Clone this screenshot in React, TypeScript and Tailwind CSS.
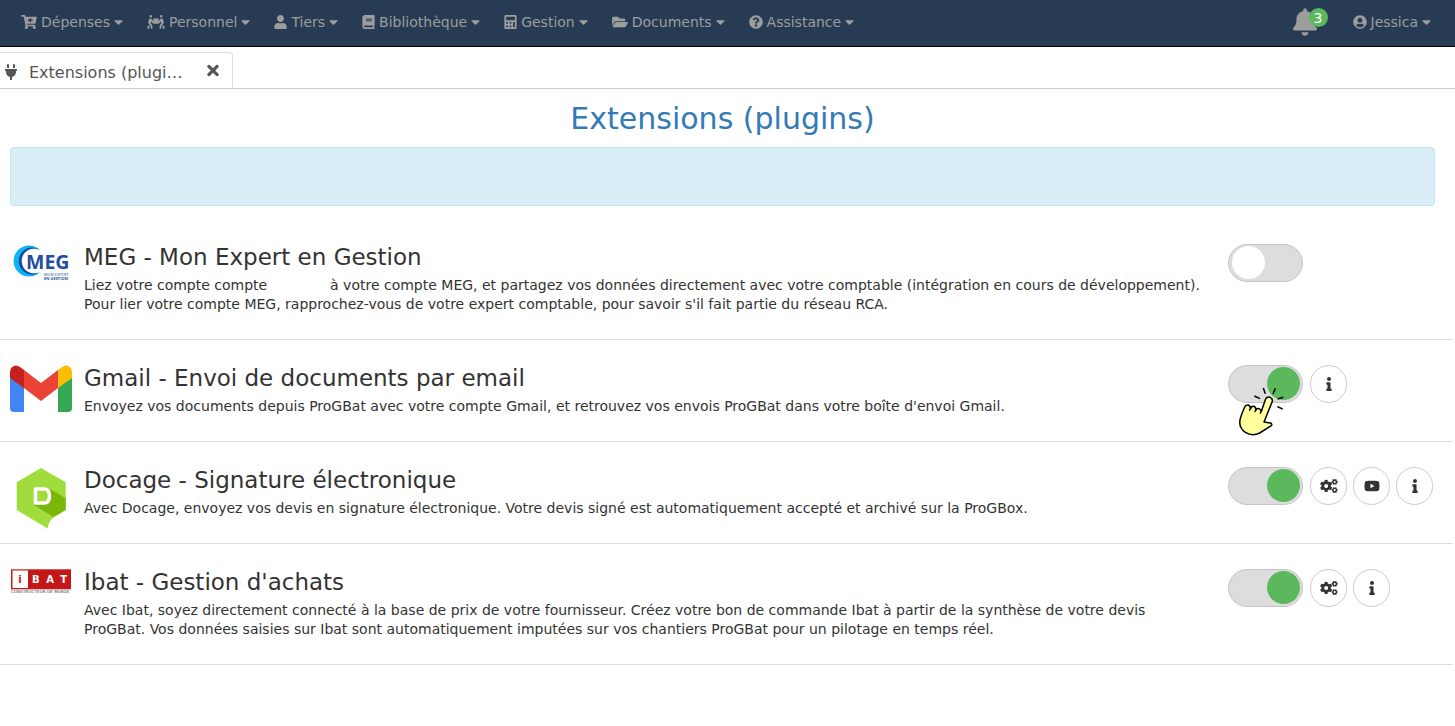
import type { ReactNode } from "react";
import type { IconType } from "react-icons";
import {
  FaBell,
  FaBook,
  FaCalculator,
  FaCaretDown,
  FaCartPlus,
  FaCogs,
  FaFolderOpen,
  FaInfo,
  FaPeopleCarry,
  FaPlug,
  FaQuestionCircle,
  FaTimes,
  FaUser,
  FaUserCircle,
  FaYoutube,
} from "react-icons/fa";

type Menu = { label: string; icon: IconType; iconWidth: string };

const menus: Menu[] = [
  { label: "Dépenses", icon: FaCartPlus, iconWidth: "w-4" },
  { label: "Personnel", icon: FaPeopleCarry, iconWidth: "w-[18px]" },
  { label: "Tiers", icon: FaUser, iconWidth: "w-[13px]" },
  { label: "Bibliothèque", icon: FaBook, iconWidth: "w-[13px]" },
  { label: "Gestion", icon: FaCalculator, iconWidth: "w-[13px]" },
  { label: "Documents", icon: FaFolderOpen, iconWidth: "w-4" },
  { label: "Assistance", icon: FaQuestionCircle, iconWidth: "w-3.5" },
];

function MenuButton({ label, icon: Icon, iconWidth }: Menu) {
  return (
    <button type="button" className="flex items-center gap-1 whitespace-nowrap">
      <Icon className={`h-3.5 ${iconWidth}`} />
      <span>{label}</span>
      <FaCaretDown className="h-3.5 w-[9px]" />
    </button>
  );
}

function MegLogo() {
  return (
    <svg viewBox="0 0 62 40" className="w-full" aria-hidden="true">
      <path d="M30 6A15.500 15.500 0 1 0 30 28A12.500 12.500 0 1 1 30 6Z" fill="#0db4f5" />
      <path d="M30 6A13.500 13.500 0 1 0 30 28A12.500 12.500 0 1 1 30 6Z" fill="#1b4a9c" />
      <text x="16" y="24.500" fontFamily="Open Sans, sans-serif" fontWeight="700" fontSize="19.500" stroke="#fff" strokeWidth="1" paintOrder="stroke" fill="#1f4e9f">MEG</text>
      <text x="34" y="31.500" fontFamily="Open Sans, sans-serif" fontSize="4" fill="#1f4e9f">MON EXPERT</text>
      <text x="34" y="35.500" fontFamily="Open Sans, sans-serif" fontWeight="700" fontSize="4" fill="#1f4e9f">EN GESTION</text>
    </svg>
  );
}

function GmailLogo() {
  return (
    <svg viewBox="0 0 62 47" className="w-full" aria-hidden="true">
      <path d="M0 12L14 21V47H4Q0 47 0 43Z" fill="#4285f4" />
      <path d="M48 21L62 12V43Q62 47 58 47H48Z" fill="#34a853" />
      <path d="M48 5L52 2Q56 -1 60 2Q62 4 62 7V13L48 23Z" fill="#fbbc04" />
      <path d="M14 5L31 18L48 5V23L31 36L14 23Z" fill="#ea4335" />
      <path d="M14 5L10 2Q6 -1 2 2Q0 4 0 7V13L14 23Z" fill="#c5221f" />
    </svg>
  );
}

function DocageLogo() {
  return (
    <svg viewBox="0 0 62 62" className="w-full" aria-hidden="true">
      <path d="M31 1L55.700 15.300V43L44 50Q38.500 54 37.700 61.500L6.700 43V15.300Z" fill="#a0dc3c" />
      <path d="M40 22L55.700 31.300V43L43.500 50L24 38Z" fill="#7db60b" />
      <path d="M25.500 22H34Q39.500 22 39.500 29T34 36H25.500Z" fill="#a0dc3c" stroke="#fff" strokeWidth="3.500" strokeLinejoin="round" />
    </svg>
  );
}

function IbatLogo() {
  return (
    <svg viewBox="0 0 62 25" className="w-full" aria-hidden="true">
      <rect x="1" y="0.300" width="60" height="20" fill="#c41818" />
      <rect x="2.500" y="1.500" width="15.500" height="17.500" fill="#fff" />
      <g fontFamily="DejaVu Sans, sans-serif" fontWeight="700" fontSize="10" textAnchor="middle">
        <text x="10" y="14" fill="#c41818">i</text>
        <text x="25.700" y="14" fill="#fff">B</text>
        <text x="40" y="14" fill="#fff">A</text>
        <text x="53.700" y="14" fill="#fff">T</text>
      </g>
      <text x="1" y="23.700" fontFamily="DejaVu Sans, sans-serif" fontSize="4.200" fill="#444">CONSTRUCTEUR DE MARGE</text>
    </svg>
  );
}

function PointingHand() {
  return (
    <svg viewBox="66 93 144 153" className="pointer-events-none absolute top-[21px] left-[9px] w-12" aria-hidden="true">
      <path
        d="M152 132Q156 124 165 127Q174 131 172 139L147 201L166 204Q173 207 169 212L134 234Q112 245 91 232Q71 218 75 195Q77 184 89 156Q92 149 99 150Q106 152 107 161Q109 153 116 154Q123 156 123 165Q125 159 132 161Q138 164 139 169Z"
        fill="#ffff9e"
        stroke="#000"
        strokeWidth="4.500"
        strokeLinejoin="round"
      />
      <path d="M107 157L104 166M123 161L120 170M140 165L136 175" fill="none" stroke="#000" strokeWidth="4" strokeLinecap="round" />
      <path d="M118 123L135 131M145 99L151 116M181 100L174 117M188 132L205 127M187 155L203 162" fill="none" stroke="#000" strokeWidth="4.500" />
    </svg>
  );
}

type Action = { label: string; icon: IconType; iconWidth: string };

const info: Action = { label: "Informations", icon: FaInfo, iconWidth: "w-1.5" };
const settings: Action = { label: "Paramètres", icon: FaCogs, iconWidth: "w-[18px]" };
const video: Action = { label: "Vidéo", icon: FaYoutube, iconWidth: "w-4" };

type Plugin = {
  name: string;
  logo: ReactNode;
  description: ReactNode;
  enabled: boolean;
  pointer?: boolean;
  actions: Action[];
};

const plugins: Plugin[] = [
  {
    name: "MEG - Mon Expert en Gestion",
    logo: <MegLogo />,
    description: (
      <>
        Liez votre compte compte <span className="inline-block w-[54px]" /> à votre compte MEG, et partagez vos données
        directement avec votre comptable (intégration en cours de développement).
        <br />
        Pour lier votre compte MEG, rapprochez-vous de votre expert comptable, pour savoir s'il fait partie du réseau RCA.
      </>
    ),
    enabled: false,
    actions: [],
  },
  {
    name: "Gmail - Envoi de documents par email",
    logo: <GmailLogo />,
    description:
      "Envoyez vos documents depuis ProGBat avec votre compte Gmail, et retrouvez vos envois ProGBat dans votre boîte d'envoi Gmail.",
    enabled: true,
    pointer: true,
    actions: [info],
  },
  {
    name: "Docage - Signature électronique",
    logo: <DocageLogo />,
    description:
      "Avec Docage, envoyez vos devis en signature électronique. Votre devis signé est automatiquement accepté et archivé sur la ProGBox.",
    enabled: true,
    actions: [settings, video, info],
  },
  {
    name: "Ibat - Gestion d'achats",
    logo: <IbatLogo />,
    description:
      "Avec Ibat, soyez directement connecté à la base de prix de votre fournisseur. Créez votre bon de commande Ibat à partir de la synthèse de votre devis ProGBat. Vos données saisies sur Ibat sont automatiquement imputées sur vos chantiers ProGBat pour un pilotage en temps réel.",
    enabled: true,
    actions: [settings, info],
  },
];

function PluginRow({ plugin }: { plugin: Plugin }) {
  return (
    <li className="flex items-start border-b border-[#ddd] py-[25px] pl-2.5">
      <div className="-mb-4 w-[62px] shrink-0">{plugin.logo}</div>
      <div className="min-w-0 flex-1 pr-5 pl-3">
        <h2 className="text-[23px] leading-[26px]">{plugin.name}</h2>
        <p className="mt-1.5 text-sm leading-[19px]">{plugin.description}</p>
      </div>
      <div className="-mb-4 flex w-[225px] shrink-0 gap-1.5">
        <div className="relative mr-px h-[38px]">
          <input
            type="checkbox"
            role="switch"
            aria-label={plugin.name}
            defaultChecked={plugin.enabled}
            className="block h-[38px] w-[75px] appearance-none rounded-full border border-[#c5c5c5] bg-[#ddd] before:mt-px before:ml-[3px] before:block before:size-[33px] before:rounded-full before:bg-white checked:before:ml-[38px] checked:before:bg-[#5cb85c]"
          />
          {plugin.pointer && <PointingHand />}
        </div>
        {plugin.actions.map(({ label, icon: Icon, iconWidth }) => (
          <button
            key={label}
            type="button"
            aria-label={label}
            className="flex h-[38px] w-[37px] items-center justify-center rounded-full border border-[#ccc] bg-white"
          >
            <Icon className={`h-3.5 ${iconWidth}`} />
          </button>
        ))}
      </div>
    </li>
  );
}

export default function App() {
  return (
    <div className="bg-white font-['DejaVu_Sans',sans-serif] text-[#333]">
      <header className="flex h-[47px] items-center justify-between border-b border-black bg-[#283b54] pr-6 pb-0.5 pl-[21px] text-sm text-[#9d9d9d]">
        <nav className="flex items-center gap-6">
          {menus.map((menu) => (
            <MenuButton key={menu.label} {...menu} />
          ))}
        </nav>
        <div className="flex items-center gap-9">
          <button type="button" aria-label="Notifications" className="relative">
            <FaBell className="h-7 w-6" />
            <span className="absolute top-0 left-4 flex size-[19px] items-center justify-center rounded-full bg-[#5cb85c] text-sm text-white">
              3
            </span>
          </button>
          <MenuButton label="Jessica" icon={FaUserCircle} iconWidth="w-3.5" />
        </div>
      </header>

      <div className="flex border-b border-[#ccc] pt-[5px]">
        <div className="flex h-9 w-[233px] items-center rounded-tr border-t border-r border-[#ddd] pr-[13px] pl-[5px] text-base text-[#555]">
          <FaPlug className="mt-0.5 h-4 w-3" />
          <span className="mt-1 ml-3 flex-1 truncate">Extensions (plugi…</span>
          <button type="button" aria-label="Fermer">
            <FaTimes className="h-[17px] w-3" />
          </button>
        </div>
      </div>

      <main className="pr-0.5">
        <h1 className="mt-3 mr-[18px] ml-2.5 text-center text-3xl leading-9 text-[#337ab7]">Extensions (plugins)</h1>
        <div className="mt-2.5 mr-[18px] mb-[13px] ml-2.5 h-[59px] rounded border border-[#bce8f1] bg-[#d9edf7]" />
        <ul>
          {plugins.map((plugin) => (
            <PluginRow key={plugin.name} plugin={plugin} />
          ))}
        </ul>
      </main>
    </div>
  );
}
